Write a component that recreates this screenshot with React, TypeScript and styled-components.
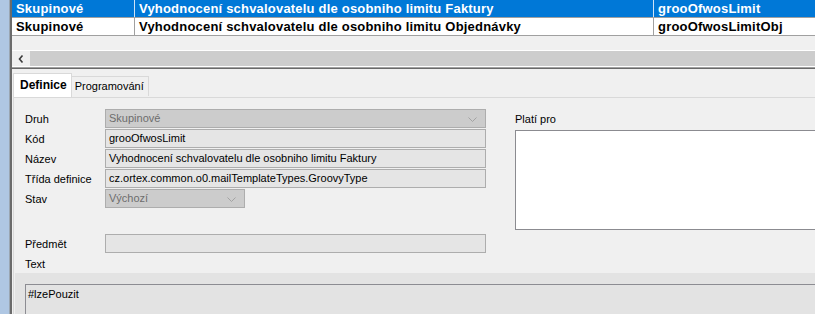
import styled, { createGlobalStyle } from 'styled-components';

const GlobalStyle = createGlobalStyle`
  html, body {
    margin: 0;
    padding: 0;
    background: #f0f0f0;
  }
  body {
    font-family: "Liberation Sans", Arial, sans-serif;
    font-size: 11px;
    color: #000;
  }
`;

const Screen = styled.div`
  display: flex;
  width: 815px;
  height: 314px;
  overflow: hidden;
  background: #f0f0f0;
`;

const SideStrip = styled.div`
  flex: none;
  width: 9px;
  background: #afc7e3;
  border-right: 1px solid #9aa6b2;
`;

const Edge = styled.div`
  flex: none;
  width: 2px;
  background: #6b6b6b;
`;

const Main = styled.div`
  flex: 1;
  min-width: 0;
  display: flex;
  flex-direction: column;
  overflow: hidden;
`;

const GridRow = styled.div<{ $selected?: boolean }>`
  display: grid;
  grid-template-columns: 123px 519px 1fr;
  height: 18px;
  box-sizing: border-box;
  border-bottom: 1px solid #a0a0a0;
  background: ${(p) => (p.$selected ? '#0078d7' : '#fff')};
  color: ${(p) => (p.$selected ? '#fff' : '#000')};
  font-size: 13px;
  font-weight: bold;
  letter-spacing: 0.2px;
  line-height: 17px;
`;

const Cell = styled.div<{ $selected?: boolean }>`
  padding-left: 4px;
  white-space: nowrap;
  overflow: hidden;
  border-right: 1px solid ${(p) => (p.$selected ? '#cfe3f5' : '#a0a0a0')};

  &:last-child {
    border-right: none;
  }
`;

const GridEmpty = styled.div`
  height: 14px;
`;

const ScrollBar = styled.div`
  display: flex;
  height: 15px;
  border-top: 1px solid #fff;
  background: #cdcdcd;
`;

const ScrollArrow = styled.div`
  width: 18px;
  display: flex;
  align-items: center;
  justify-content: center;
  background: #f0f0f0;
`;

const Splitter = styled.div`
  height: 1px;
  border-top: 1px solid #fff;
  border-bottom: 1px solid #696969;
  background: #a0a0a0;
  margin-bottom: 4px;
`;

const TabStrip = styled.div`
  display: flex;
  align-items: flex-end;
  height: 24px;
  padding-left: 1px;
`;

const Tab = styled.div<{ $active?: boolean }>`
  box-sizing: border-box;
  height: ${(p) => (p.$active ? '24px' : '20px')};
  margin-bottom: ${(p) => (p.$active ? '0' : '1px')};
  padding: ${(p) => (p.$active ? '4px 4px 0 6px' : '2px 4px 0 3px')};
  border: 1px solid #d9d9d9;
  border-bottom: none;
  border-left: ${(p) => (p.$active ? '1px solid #d9d9d9' : 'none')};
  background: ${(p) => (p.$active ? '#fff' : '#f0f0f0')};
  font-size: ${(p) => (p.$active ? '12px' : '11px')};
  font-weight: ${(p) => (p.$active ? 'bold' : 'normal')};
  line-height: 14px;
`;

const Panel = styled.div`
  flex: 1;
  margin-left: 1px;
  border-top: 1px solid #d9d9d9;
  border-left: 1px solid #d9d9d9;
  display: flex;
  flex-direction: column;
`;

const FormArea = styled.div`
  display: flex;
  gap: 29px;
  padding: 11px 0 0 11px;
`;

const LeftColumn = styled.div`
  display: flex;
  flex-direction: column;
  flex: none;
`;

const FieldRow = styled.div`
  display: flex;
  align-items: center;
  height: 19px;
  margin-bottom: 1px;
`;

const Label = styled.div`
  width: 80px;
  flex: none;
  line-height: 14px;
`;

const Input = styled.div<{ $disabled?: boolean; $width?: number }>`
  box-sizing: border-box;
  position: relative;
  width: ${(p) => p.$width ?? 381}px;
  height: 19px;
  padding-left: 3px;
  border: 1px solid #adadad;
  background: ${(p) => (p.$disabled ? '#cccccc' : '#e5e5e5')};
  color: ${(p) => (p.$disabled ? '#6d6d6d' : '#000')};
  line-height: 17px;
  white-space: nowrap;
  overflow: hidden;
`;

const Chevron = styled.svg`
  position: absolute;
  right: 8px;
  top: 7px;
`;

const Spacer = styled.div`
  height: 25px;
`;

const TextLabel = styled.div`
  height: 16px;
  padding-top: 3px;
  line-height: 14px;
`;

const RightColumn = styled.div`
  padding-top: 3px;
  display: flex;
  flex-direction: column;
`;

const SideLabel = styled.div`
  line-height: 14px;
  margin-bottom: 4px;
`;

const ListBox = styled.div`
  width: 310px;
  height: 100px;
  box-sizing: border-box;
  border: 1px solid #8b8b90;
  background: #fff;
`;

const TextRegion = styled.div`
  flex: 1;
  margin-left: 1px;
  padding: 11px 0 0 10px;
  background: #e3e3e3;
`;

const TextBox = styled.div`
  height: 100%;
  box-sizing: border-box;
  border-top: 1px solid #8c8c92;
  border-left: 1px solid #8c8c92;
  padding: 2px 0 0 2px;
  line-height: 14px;
`;

const ComboArrow = () => (
  <Chevron width="9" height="5" viewBox="0 0 9 5">
    <polyline points="0.5,0.5 4.5,4.5 8.5,0.5" fill="none" stroke="#a3a3a3" strokeWidth="1" />
  </Chevron>
);

const rows = [
  {
    druh: 'Skupinové',
    nazev: 'Vyhodnocení schvalovatelu dle osobniho limitu Faktury',
    kod: 'grooOfwosLimit',
  },
  {
    druh: 'Skupinové',
    nazev: 'Vyhodnocení schvalovatelu dle osobniho limitu Objednávky',
    kod: 'grooOfwosLimitObj',
  },
];

export default function App() {
  return (
    <>
      <GlobalStyle />
      <Screen>
        <SideStrip />
        <Edge />
        <Main>
          {rows.map((r, i) => (
            <GridRow key={r.kod} $selected={i === 0}>
              <Cell $selected={i === 0}>{r.druh}</Cell>
              <Cell $selected={i === 0}>{r.nazev}</Cell>
              <Cell $selected={i === 0}>{r.kod}</Cell>
            </GridRow>
          ))}
          <GridEmpty />
          <ScrollBar>
            <ScrollArrow>
              <svg width="6" height="8" viewBox="0 0 6 8">
                <polyline points="4.5,0.5 1.5,4 4.5,7.5" fill="none" stroke="#3c3c3c" strokeWidth="1.6" />
              </svg>
            </ScrollArrow>
          </ScrollBar>
          <Splitter />
          <TabStrip>
            <Tab $active>Definice</Tab>
            <Tab>Programování</Tab>
          </TabStrip>
          <Panel>
            <FormArea>
              <LeftColumn>
                <FieldRow>
                  <Label>Druh</Label>
                  <Input $disabled>
                    Skupinové
                    <ComboArrow />
                  </Input>
                </FieldRow>
                <FieldRow>
                  <Label>Kód</Label>
                  <Input>grooOfwosLimit</Input>
                </FieldRow>
                <FieldRow>
                  <Label>Název</Label>
                  <Input>Vyhodnocení schvalovatelu dle osobniho limitu Faktury</Input>
                </FieldRow>
                <FieldRow>
                  <Label>Třída definice</Label>
                  <Input>cz.ortex.common.o0.mailTemplateTypes.GroovyType</Input>
                </FieldRow>
                <FieldRow>
                  <Label>Stav</Label>
                  <Input $disabled $width={140}>
                    Výchozí
                    <ComboArrow />
                  </Input>
                </FieldRow>
                <Spacer />
                <FieldRow>
                  <Label>Předmět</Label>
                  <Input />
                </FieldRow>
                <TextLabel>Text</TextLabel>
              </LeftColumn>
              <RightColumn>
                <SideLabel>Platí pro</SideLabel>
                <ListBox />
              </RightColumn>
            </FormArea>
            <TextRegion>
              <TextBox>#lzePouzit</TextBox>
            </TextRegion>
          </Panel>
        </Main>
      </Screen>
    </>
  );
}
